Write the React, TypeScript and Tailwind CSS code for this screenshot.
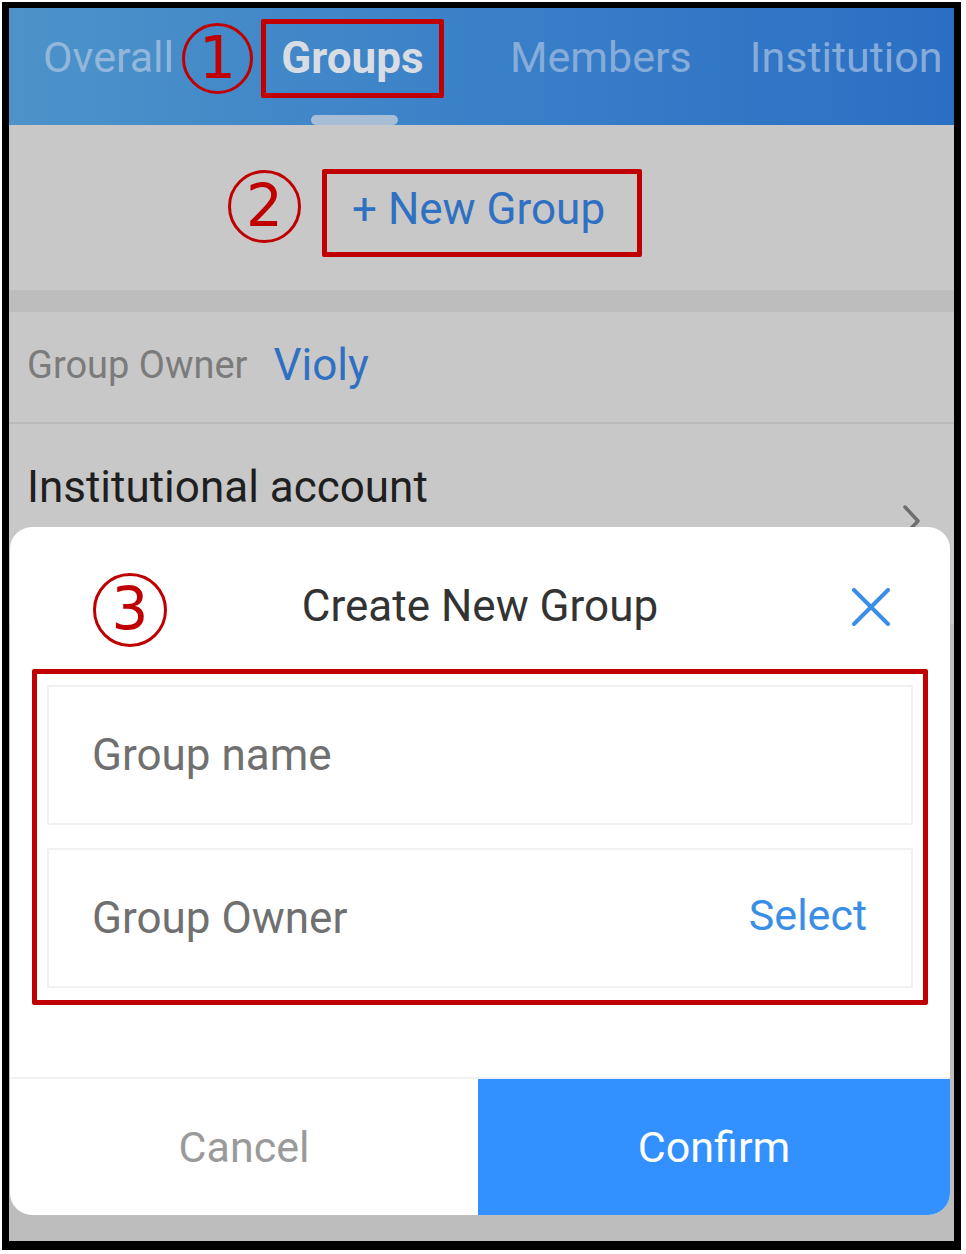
import React from "react";

const Circled = ({ n, size }: { n: string; size: string }) => (
  <div
    className={`${size} shrink-0 flex items-center justify-center rounded-full border-[3px] border-[#c00000] text-[#c00000] font-['DejaVu_Sans',sans-serif] text-[58px] leading-none`}
  >
    <span className="-mt-[2px]">{n}</span>
  </div>
);

const Tabs = () => (
  <div className="h-[117px] shrink-0 flex flex-col bg-gradient-to-r from-[#4d93c9] via-[#3a80c8] to-[#2b6fc4]">
    <div className="mt-[11px] h-[79px] flex items-center text-[43px] leading-none whitespace-nowrap">
      <span className="ml-[34px] text-[#92b7da] -mt-[2px]">Overall</span>
      <div className="ml-[8px]">
        <Circled n="1" size="w-[71px] h-[71px]" />
      </div>
      <div className="ml-[8px] w-[183px] h-[79px] border-[5px] border-[#c00000] rounded-[2px] flex items-center justify-center">
        <span className="font-bold text-[44px] text-[#d8dde3] -mt-[2px]">Groups</span>
      </div>
      <span className="ml-[66px] text-[#86acd9] -mt-[2px]">Members</span>
      <span className="ml-[58px] text-[#86acd9] -mt-[2px]">Institution</span>
    </div>
    <div className="mt-auto ml-[302px] w-[87px] h-[10px] rounded-full bg-[#a8bed7]" />
  </div>
);

const Background = () => (
  <div className="flex-1 flex flex-col bg-[#bdbdbd]">
    <div className="h-[165px] shrink-0 bg-[#c8c8c8] flex items-start pt-[44px] pl-[219px]">
      <div className="mt-[1px]">
        <Circled n="2" size="w-[73px] h-[73px]" />
      </div>
      <div className="ml-[21px] w-[320px] h-[88px] border-[5px] border-[#c00000] rounded-[2px] flex items-center pl-[25px]">
        <span className="text-[44px] leading-none text-[#2f70c2] -mt-[8px]">+ New Group</span>
      </div>
    </div>
    <div className="h-[22px] shrink-0" />
    <div className="h-[112px] shrink-0 bg-[#c8c8c8] border-b-2 border-[#bababa] flex items-center pl-[18px] pb-[4px]">
      <span className="text-[38px] text-[#7b7b7b]">Group Owner</span>
      <span className="ml-[26px] text-[44px] text-[#2f70c2]">Violy</span>
    </div>
    <div className="h-[200px] shrink-0 bg-[#c8c8c8] flex items-start justify-between pl-[18px] pr-[33px] pt-[38px]">
      <span className="text-[44px] leading-[50px] text-[#1f1f1f]">Institutional account</span>
      <svg width="18" height="32" viewBox="0 0 18 32" className="mt-[43px]">
        <polyline points="2,2 15,16 2,30" fill="none" stroke="#6e6e6e" strokeWidth="3.5" strokeLinecap="round" strokeLinejoin="round" />
      </svg>
    </div>
  </div>
);

const Field = ({ label, action }: { label: string; action?: string }) => (
  <div className="h-[140px] border-2 border-[#f1f1f1] flex items-center justify-between pl-[43px] pr-[44px]">
    <span className="text-[44px] text-[#707070]">{label}</span>
    {action && <span className="text-[43px] text-[#3a8ee6] -mt-[6px]">{action}</span>}
  </div>
);

const Modal = () => (
  <div className="absolute left-[1px] top-[519px] w-[940px] h-[688px] bg-white rounded-[22px] overflow-hidden flex flex-col">
    <div className="h-[142px] shrink-0 grid grid-cols-[1fr_auto_1fr] items-start pt-[46px]">
      <div className="pl-[83px]">
        <Circled n="3" size="w-[74px] h-[74px]" />
      </div>
      <span className="text-[44px] leading-[74px] text-[#333333] -mt-[4px]">Create New Group</span>
      <div className="flex justify-end pr-[60px] pt-[15px]">
        <svg width="38" height="38" viewBox="0 0 38 38">
          <path d="M2 2 L36 36 M36 2 L2 36" stroke="#3a8ee6" strokeWidth="4" strokeLinecap="round" />
        </svg>
      </div>
    </div>
    <div className="mx-[22px] h-[336px] shrink-0 border-[5px] border-[#c00000] rounded-[2px] pt-[11px] px-[10px] flex flex-col gap-[23px]">
      <Field label="Group name" />
      <Field label="Group Owner" action="Select" />
    </div>
    <div className="flex-1" />
    <div className="h-[2px] shrink-0 bg-[#f1f1f1]" />
    <div className="h-[136px] shrink-0 flex text-[43px]">
      <div className="w-[468px] flex items-center justify-center text-[#9a9a9a]">Cancel</div>
      <div className="flex-1 flex items-center justify-center bg-[#3390ff] text-white">Confirm</div>
    </div>
  </div>
);

export default function App() {
  return (
    <div className="w-[966px] h-[1254px] bg-white pl-[2px] pt-[2px] pr-[5px] pb-[4px] font-['Roboto',sans-serif]">
      <div className="relative h-full flex flex-col overflow-hidden border-black border-x-[7px] border-t-[6px] border-b-[9px]">
        <Tabs />
        <Background />
        <Modal />
      </div>
    </div>
  );
}
